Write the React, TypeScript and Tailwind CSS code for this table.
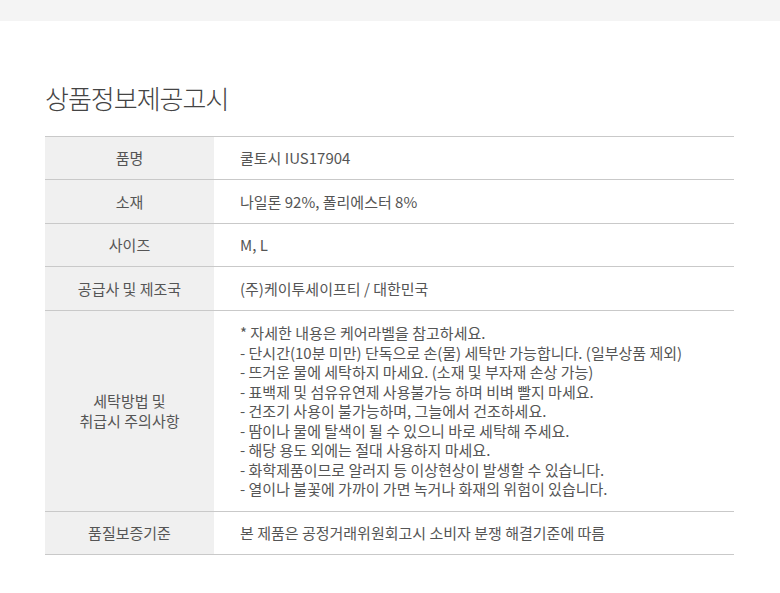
const rows: { label: string[]; value: string[]; h: string; tall?: boolean }[] = [
  { label: ['품명'], value: ['쿨토시 IUS17904'], h: 'h-[43px]' },
  { label: ['소재'], value: ['나일론 92%, 폴리에스터 8%'], h: 'h-[44px]' },
  { label: ['사이즈'], value: ['M, L'], h: 'h-[43px]' },
  { label: ['공급사 및 제조국'], value: ['(주)케이투세이프티 / 대한민국'], h: 'h-[44px]' },
  {
    label: ['세탁방법 및', '취급시 주의사항'],
    h: 'h-[201px]',
    tall: true,
    value: [
      '* 자세한 내용은 케어라벨을 참고하세요.',
      '- 단시간(10분 미만) 단독으로 손(물) 세탁만 가능합니다. (일부상품 제외)',
      '- 뜨거운 물에 세탁하지 마세요. (소재 및 부자재 손상 가능)',
      '- 표백제 및 섬유유연제 사용불가능 하며 비벼 빨지 마세요.',
      '- 건조기 사용이 불가능하며, 그늘에서 건조하세요.',
      '- 땀이나 물에 탈색이 될 수 있으니 바로 세탁해 주세요.',
      '- 해당 용도 외에는 절대 사용하지 마세요.',
      '- 화학제품이므로 알러지 등 이상현상이 발생할 수 있습니다.',
      '- 열이나 불꽃에 가까이 가면 녹거나 화재의 위험이 있습니다.',
    ],
  },
  { label: ['품질보증기준'], value: ['본 제품은 공정거래위원회고시 소비자 분쟁 해결기준에 따름'], h: 'h-[43px]' },
];

export default function App() {
  return (
    <div
      className="min-h-[593px] w-[780px] bg-white text-[#555]"
      style={{ fontFamily: '"Noto Sans CJK KR", "Noto Sans", sans-serif' }}
    >
      <div className="h-[21px] bg-[#f4f4f4]" />
      <div className="px-[45px] pt-[59px]">
        <h1 className="text-[26px] font-light leading-[36px] tracking-[-1px] text-[#444]">상품정보제공고시</h1>
        <div className="mt-[20px] w-[689px] border-t border-[#c9c9c9]">
          {rows.map((row, i) => (
            <div key={i} className={`flex border-b border-[#c9c9c9] ${row.h}`}>
              <div className="flex w-[169px] shrink-0 flex-col items-center justify-center bg-[#f0f0f0] text-center text-[15px] leading-[20px]">
                {row.label.map((l) => (
                  <span key={l}>{l}</span>
                ))}
              </div>
              <div
                className={`flex flex-col justify-center whitespace-nowrap pl-[26px] text-[15px] ${
                  row.tall ? 'leading-[19.5px]' : 'leading-[20px]'
                }`}
              >
                {row.value.map((v) => (
                  <span key={v}>{v}</span>
                ))}
              </div>
            </div>
          ))}
        </div>
      </div>
    </div>
  );
}
